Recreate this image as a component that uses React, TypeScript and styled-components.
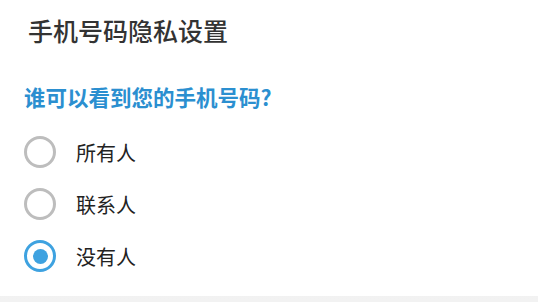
import React, { useState } from "react";
import styled, { createGlobalStyle } from "styled-components";

const Global = createGlobalStyle`
  html, body { margin: 0; padding: 0; background: #ededed; }
  body { font-family: "Noto Sans CJK SC", "Noto Sans", sans-serif; }
`;

const Page = styled.div`
  width: 538px;
  height: 302px;
  display: flex;
  flex-direction: column;
  background: linear-gradient(#e8e8e8, #f2f2f2);
`;

const Dialog = styled.div`
  background: #fff;
  height: 296px;
  display: flex;
  flex-direction: column;
`;

const Title = styled.h1`
  margin: 0;
  height: 62px;
  line-height: 60px;
  padding-left: 28px;
  font-size: 25px;
  font-weight: 500;
  color: #333;
`;

const Question = styled.h2`
  margin: 20px 0 0 24px;
  line-height: 30px;
  font-size: 21.5px;
  font-weight: 700;
  color: #2b8fd0;
`;

const Options = styled.div`
  margin-top: 14px;
  display: flex;
  flex-direction: column;
`;

const Row = styled.label`
  height: 52px;
  display: flex;
  align-items: center;
  padding-left: 24px;
  cursor: pointer;
`;

const Circle = styled.span<{ $on: boolean }>`
  box-sizing: border-box;
  width: 32px;
  height: 32px;
  border-radius: 50%;
  border: 3px solid ${(p) => (p.$on ? "#3ea2e0" : "#bdbdbd")};
  display: flex;
  align-items: center;
  justify-content: center;
  &::after {
    content: "";
    width: 15px;
    height: 15px;
    border-radius: 50%;
    background: ${(p) => (p.$on ? "#3ea2e0" : "transparent")};
  }
`;

const Label = styled.span`
  margin-left: 20px;
  font-size: 20px;
  color: #222;
`;

const opts = ["所有人", "联系人", "没有人"];

export default function App() {
  const [sel, setSel] = useState(2);
  return (
    <>
      <Global />
      <Page>
        <Dialog>
          <Title>手机号码隐私设置</Title>
          <Question>谁可以看到您的手机号码?</Question>
          <Options>
            {opts.map((o, i) => (
              <Row key={o} onClick={() => setSel(i)}>
                <Circle $on={sel === i} />
                <Label>{o}</Label>
              </Row>
            ))}
          </Options>
        </Dialog>
      </Page>
    </>
  );
}
